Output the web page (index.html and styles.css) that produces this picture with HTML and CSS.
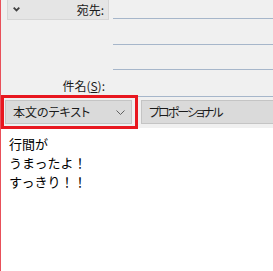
FILE: index.html
```html
<!DOCTYPE html>
<html lang="ja">
  <head>
    <meta charset="UTF-8">
    <title>メール作成</title>
    <link rel="stylesheet" href="styles.css">
  </head>
  <body>
    <main class="window">
      <div class="header">
        <div class="fields">
          <button class="to-btn">
            <svg class="to-chev" viewBox="0 0 7 5" width="7" height="5">
              <path d="M0.7 0.7 L3.5 3.5 L6.3 0.7" />
            </svg>
            <span>宛先:</span>
          </button>
          <div class="field"></div>

          <div></div>
          <div class="field"></div>

          <div></div>
          <div class="field"></div>

          <label class="subject-label">件名(<u>S</u>):</label>
          <div class="field"></div>
        </div>

        <div class="toolbar">
          <div class="select select--style">
            <span>本文のテキスト</span>
            <svg class="select-chev" viewBox="0 0 9 5" width="9" height="5">
              <path d="M0.5 0.5 L4.5 4.5 L8.5 0.5" />
            </svg>
          </div>
          <div class="select select--font">
            <span>プロポーショナル</span>
          </div>
        </div>
      </div>

      <div class="body-text">
        行間が<br>
        うまったよ！<br>
        すっきり！！
      </div>

      <div class="highlight"></div>
    </main>
  </body>
</html>
```

FILE: styles.css
```css
html,
body {
  margin: 0;
  width: 273px;
  height: 271px;
  overflow: hidden;
}

body {
  background-color: #ffffff;
  font-family: "Noto Sans CJK JP", "Noto Sans", sans-serif;
  color: #1a1a1a;
}

.window {
  position: relative;
  display: flex;
  flex-direction: column;
  height: 271px;
  border-left: 1px solid #e8505a;
}

.header {
  background-color: #f0f0f0;
  font-feature-settings: "palt";
}

.fields {
  display: grid;
  grid-template-columns: 102px 1fr;
  grid-template-rows: 19px 26px 25px 27px;
  column-gap: 4px;
  padding-left: 6px;
}

.field {
  border-bottom: 1px solid #a6b6ca;
}

.to-btn {
  display: flex;
  align-items: center;
  justify-content: space-between;
  align-self: start;
  box-sizing: border-box;
  height: 21px;
  margin: -1px 0 0 0;
  padding: 0 4px 0 5px;
  background-color: #e5e5e5;
  border: 1px solid #d6d6d6;
  font: inherit;
  font-size: 12px;
  line-height: 16px;
  color: #1a1a1a;
}

.to-chev {
  fill: none;
  stroke: #404040;
  stroke-width: 1.8;
}

.subject-label {
  align-self: end;
  justify-self: end;
  margin: 0 4px 3px 0;
  font-size: 12px;
  line-height: 16px;
}

.subject-label u {
  text-underline-offset: 1px;
}

.toolbar {
  display: flex;
  gap: 9px;
  height: 31px;
  padding: 3px 0 0 4px;
  box-sizing: border-box;
}

.select {
  display: flex;
  align-items: center;
  box-sizing: border-box;
  height: 24px;
  padding: 0 6px 0 7px;
  background-color: #dadada;
  border: 1px solid #c4c4c4;
  font-size: 12px;
  line-height: 16px;
}

.select--style {
  width: 127px;
  justify-content: space-between;
}

.select--font {
  flex: 1;
  margin-right: -1px;
  letter-spacing: -2px;
}

.select-chev {
  fill: none;
  stroke: #606060;
  stroke-width: 1;
}

.body-text {
  flex: 1;
  padding: 6px 8px;
  font-size: 13px;
  line-height: 19px;
  color: #000000;
}

/* annotation frame drawn over the style picker */
.highlight {
  position: absolute;
  left: 0;
  top: 95px;
  width: 137px;
  height: 34px;
  box-sizing: border-box;
  border: 3px solid #e8171f;
}
```
